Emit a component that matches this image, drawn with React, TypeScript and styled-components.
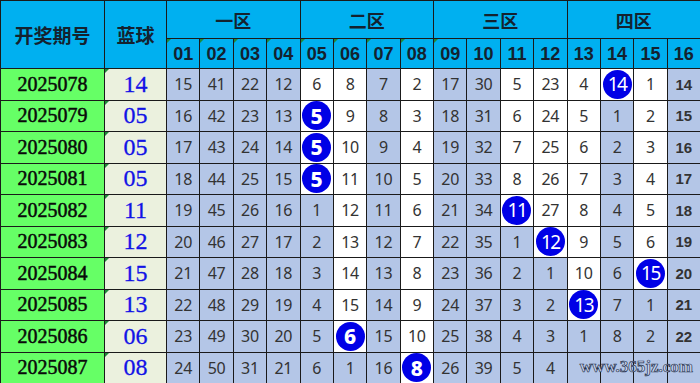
import React from "react";
import styled, { createGlobalStyle, css } from "styled-components";

const GlobalStyle = createGlobalStyle`
  html, body {
    margin: 0;
    padding: 0;
    background: #ffffff;
  }
`;

const Wrapper = styled.div`
  position: relative;
  width: 700px;
  height: 383px;
  overflow: hidden;
`;

const Table = styled.table`
  width: 700px;
  border-collapse: collapse;
  table-layout: fixed;
  border: 1px solid #000;
`;

const HeadRow = styled.tr<{ $h: number }>`
  height: ${(p) => p.$h}px;
`;

const DataRow = styled.tr`
  height: 31.5px;
`;

const HeadCell = styled.th<{ $mark?: boolean; $size?: number }>`
  position: relative;
  background: #00b0f0;
  border: 1px solid #1a1a1a;
  padding: 0;
  color: #14222f;
  font-family: "Noto Sans CJK SC", "Noto Sans", sans-serif;
  font-size: ${(p) => p.$size ?? 18}px;
  font-weight: 700;
  text-align: center;
  ${(p) =>
    p.$mark &&
    css`
      &::before {
        content: "";
        position: absolute;
        left: 0;
        top: 0;
        border-top: 4px solid #1f8a3a;
        border-right: 4px solid transparent;
      }
    `}
`;

const NumHead = styled(HeadCell)`
  font-family: "Liberation Sans", "Noto Sans", sans-serif;
  font-size: 18px;
  padding-top: 1px;
`;

const IssueCell = styled.td`
  background: #66ff66;
  border: 1px solid #1a1a1a;
  padding: 0;
  text-align: center;
  color: #0a0a0a;
  font-family: "Liberation Serif", "Times New Roman", serif;
  font-size: 20px;
  font-weight: 400;
  -webkit-text-stroke: 0.5px #0a0a0a;
`;

const BlueCell = styled.td`
  position: relative;
  background: #ebf1de;
  border: 1px solid #1a1a1a;
  padding: 0;
  text-align: center;
  color: #1212e6;
  font-family: "Liberation Serif", "Times New Roman", serif;
  font-size: 24px;
  -webkit-text-stroke: 0.3px #1212e6;
  &::before {
    content: "";
    position: absolute;
    left: 0;
    top: 0;
    border-top: 4px solid #1f8a3a;
    border-right: 4px solid transparent;
  }
`;

const NumCell = styled.td<{ $white: boolean; $last?: boolean }>`
  background: ${(p) => (p.$white ? "#ffffff" : "#b4c6e7")};
  border: 1px solid #1a1a1a;
  padding: 0;
  text-align: center;
  color: #333333;
  font-family: ${(p) =>
    p.$last ? `"Liberation Sans", Arial, sans-serif` : `"Noto Sans", sans-serif`};
  font-size: ${(p) => (p.$last ? 15 : 16)}px;
  font-weight: ${(p) => (p.$last ? 700 : 400)};
  letter-spacing: ${(p) => (p.$last ? 0 : -0.3)}px;
`;

const Ball = styled.span<{ $wide: boolean }>`
  display: inline-flex;
  align-items: center;
  justify-content: center;
  width: 29px;
  height: 29px;
  border-radius: 50%;
  background: #0000e6;
  color: #ffffff;
  font-family: "Noto Sans", sans-serif;
  font-size: ${(p) => (p.$wide ? 19 : 21)}px;
  font-weight: ${(p) => (p.$wide ? 400 : 800)};
  letter-spacing: ${(p) => (p.$wide ? -1.5 : 0)}px;
  vertical-align: middle;
`;

const Watermark = styled.div`
  position: absolute;
  right: 7px;
  bottom: 6px;
  font-family: "Liberation Serif", "Times New Roman", serif;
  font-size: 17px;
  font-weight: 700;
  color: #c9d6f2;
  -webkit-text-stroke: 0.7px #2a3550;
`;

type Cell = { v: string; kind: "w" | "g" | "b" | "e" };

const parse = (s: string): Cell[] =>
  s.split(" ").map((t) => {
    const kind = t.slice(-1) as Cell["kind"];
    return { v: kind === "e" ? "" : t.slice(0, -1), kind };
  });

const rows: { issue: string; blue: string; cells: Cell[] }[] = [
  { issue: "2025078", blue: "14", cells: parse("15g 41g 22g 12g 6w 8w 7g 2w 17g 30g 5w 23w 4w 14b 1w 14g") },
  { issue: "2025079", blue: "05", cells: parse("16g 42g 23g 13g 5b 9w 8g 3w 18g 31g 6w 24w 5w 1g 2w 15g") },
  { issue: "2025080", blue: "05", cells: parse("17g 43g 24g 14g 5b 10w 9g 4w 19g 32g 7w 25w 6w 2g 3w 16g") },
  { issue: "2025081", blue: "05", cells: parse("18g 44g 25g 15g 5b 11w 10g 5w 20g 33g 8w 26w 7w 3g 4w 17g") },
  { issue: "2025082", blue: "11", cells: parse("19g 45g 26g 16g 1g 12w 11g 6w 21g 34g 11b 27w 8w 4g 5w 18g") },
  { issue: "2025083", blue: "12", cells: parse("20g 46g 27g 17g 2g 13w 12g 7w 22g 35g 1g 12b 9w 5g 6w 19g") },
  { issue: "2025084", blue: "15", cells: parse("21g 47g 28g 18g 3g 14w 13g 8w 23g 36g 2g 1g 10w 6g 15b 20g") },
  { issue: "2025085", blue: "13", cells: parse("22g 48g 29g 19g 4g 15w 14g 9w 24g 37g 3g 2g 13b 7g 1g 21g") },
  { issue: "2025086", blue: "06", cells: parse("23g 49g 30g 20g 5g 6b 15g 10w 25g 38g 4g 3g 1g 8g 2g 22g") },
  { issue: "2025087", blue: "08", cells: parse("24g 50g 31g 21g 6g 1g 16g 8b 26g 39g 5g 4g e e e e") },
];

const zones = ["一区", "二区", "三区", "四区"];
const nums = Array.from({ length: 16 }, (_, i) => String(i + 1).padStart(2, "0"));

const App = () => {
  return (
    <Wrapper>
      <GlobalStyle />
      <Table>
        <colgroup>
          <col style={{ width: 104 }} />
          <col style={{ width: 62 }} />
          {nums.map((n) => (
            <col key={n} style={{ width: 534 / 16 }} />
          ))}
        </colgroup>
        <thead>
          <HeadRow $h={38}>
            <HeadCell rowSpan={2} $size={19}>开奖期号</HeadCell>
            <HeadCell rowSpan={2} $size={19}>蓝球</HeadCell>
            {zones.map((z) => (
              <HeadCell key={z} colSpan={4}>
                {z}
              </HeadCell>
            ))}
          </HeadRow>
          <HeadRow $h={30}>
            {nums.map((n, i) => (
              <NumHead key={n} $mark={i < 9}>
                {n}
              </NumHead>
            ))}
          </HeadRow>
        </thead>
        <tbody>
          {rows.map((r) => (
            <DataRow key={r.issue}>
              <IssueCell>{r.issue}</IssueCell>
              <BlueCell>{r.blue}</BlueCell>
              {r.cells.map((c, i) => (
                <NumCell key={i} $white={c.kind === "w" || c.kind === "b"} $last={i === 15}>
                  {c.kind === "b" ? <Ball $wide={c.v.length > 1}>{c.v}</Ball> : c.v}
                </NumCell>
              ))}
            </DataRow>
          ))}
        </tbody>
      </Table>
      <Watermark>www.365jz.com</Watermark>
    </Wrapper>
  );
};

export default App;
